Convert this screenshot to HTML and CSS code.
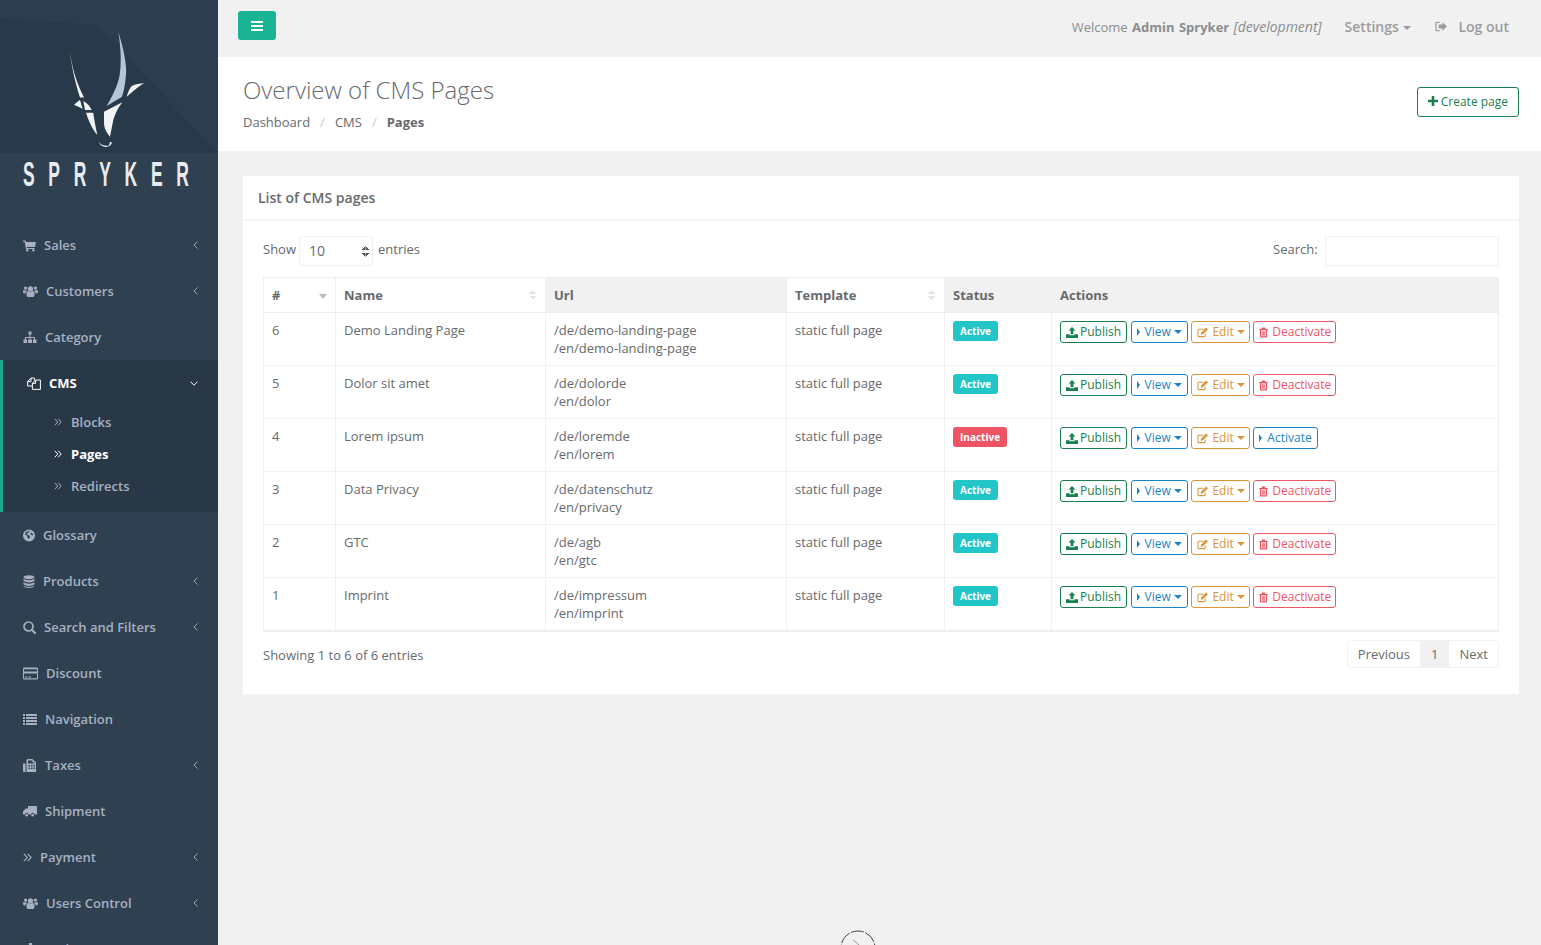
FILE: index.html
```html
<!DOCTYPE html>
<html>

<head>
    <title>Overview of CMS Pages</title>
    <link rel="stylesheet" href="styles.css">
</head>

<body>
    <svg class="sprite" xmlns="http://www.w3.org/2000/svg">
        <symbol id="i-cart" viewBox="0 0 13 12"><path d="M0 1h2.600l.4 1.400H13l-1 5H3.800l.2 1h7.600v1.200H3L1.600 2.200H0z"/><circle cx="4.200" cy="10.800" r="1.200"/><circle cx="10.400" cy="10.800" r="1.200"/></symbol>
        <symbol id="i-users" viewBox="0 0 15 12"><circle cx="7.500" cy="3.400" r="2.600"/><circle cx="2.600" cy="2.600" r="1.700"/><circle cx="12.400" cy="2.600" r="1.700"/><path d="M3.400 8.200c0-2 1.400-2.600 2.200-2.600.6.500 1.200.7 1.900.7s1.300-.2 1.900-.7c.8 0 2.200.6 2.200 2.600 0 2-.6 3.400-2.200 3.400H5.600c-1.600 0-2.200-1.400-2.200-3.400z"/><path d="M0 6c0-1 .5-1.600 1.200-1.600.5.400 1 .6 1.600.6.300 0 .6 0 .9-.2.100.3.300.5.500.7C3 6 2.400 6.800 2.300 8 .8 8 0 7.400 0 6zM15 6c0-1-.5-1.600-1.200-1.600-.5.400-1 .6-1.600.6-.3 0-.6 0-.9-.2-.1.300-.3.500-.5.700C12 6 12.600 6.800 12.700 8 14.200 8 15 7.400 15 6z"/></symbol>
        <symbol id="i-tree" viewBox="0 0 14 12"><path d="M5.500 0h3v3h-1v2.500H12V8h1.500v3.500H10V8h1V6.500H7.500V8H9v3.500H5V8h1.500V6.500H3V8h1v3.500H.5V8H2V5.500h4.500V3h-1z"/></symbol>
        <symbol id="i-copy" viewBox="0 0 14 13"><path d="M5 9H.6V4.600L4 1h3.400v2.400M4 1v3.600H.6M5.400 6.400 8.600 3h4.800v9.400h-8zM8.600 3v3.400H5.400" fill="none" stroke="currentColor" stroke-width="1"/></symbol>
        <symbol id="i-globe" viewBox="0 0 12 12"><path fill-rule="evenodd" d="M6 0a6 6 0 1 1 0 12A6 6 0 0 1 6 0zM3 2.500 2 5l2 1 .5 2 1.500 1.500L7 7 5.500 5.500 4 5V3.500L6 3l.5-1.500zM8 3l-.5 1.500L9 6l1.200-.5C10 4.500 9 3.500 8 3z"/></symbol>
        <symbol id="i-db" viewBox="0 0 12 13"><ellipse cx="6" cy="2.200" rx="5.500" ry="2"/><path d="M.5 3.600c1 1.200 3 1.600 5.500 1.600s4.500-.4 5.500-1.600v2c-.5 1.200-2.800 1.800-5.500 1.800S1 6.800.5 5.600zM.5 7.100c1 1.200 3 1.600 5.500 1.600s4.500-.4 5.500-1.600v2c-.5 1.200-2.800 1.800-5.500 1.800S1 10.300.5 9.100z"/><path d="M.5 10.500c1 1 3 1.400 5.500 1.400s4.500-.4 5.500-1.400v.5c-.5 1.200-2.800 2-5.500 2S1 12.200.5 11z"/></symbol>
        <symbol id="i-search" viewBox="0 0 13 13"><circle cx="5.500" cy="5.500" r="4.500" fill="none" stroke="currentColor" stroke-width="1.700"/><path d="m8.800 8.800 3.400 3.400" stroke="currentColor" stroke-width="2" stroke-linecap="round"/></symbol>
        <symbol id="i-card" viewBox="0 0 15 12"><path fill-rule="evenodd" d="M1.200 0h12.600A1.200 1.200 0 0 1 15 1.200v9.600a1.200 1.200 0 0 1-1.200 1.200H1.200A1.200 1.200 0 0 1 0 10.800V1.200A1.200 1.200 0 0 1 1.200 0zM1 1.800V4h13V1.800zM1 6v4.800h13V6zM2 9h2v1H2zM5 9h3v1H5z"/></symbol>
        <symbol id="i-list" viewBox="0 0 14 11"><path d="M0 0h2v2H0zM3 0h11v2H3zM0 3h2v2H0zM3 3h11v2H3zM0 6h2v2H0zM3 6h11v2H3zM0 9h2v2H0zM3 9h11v2H3z"/></symbol>
        <symbol id="i-tax" viewBox="0 0 14 13"><path fill-rule="evenodd" d="M0 4.500h2.500V13H1a1 1 0 0 1-1-1zM3.500 1.500A1.500 1.500 0 0 1 5 0h4.500L13 3.500V13H3.500zM5 1.500v3h6.500v-1h-2v-2zM5.500 6v1.500H7V6zM8 6v1.500h1.500V6zM10.500 6v1.500H12V6zM5.500 8.500V10H7V8.500zM8 8.500V10h1.500V8.500zM10.500 8.500V10H12V8.500z"/></symbol>
        <symbol id="i-truck" viewBox="0 0 14 11"><path d="M5 0h8a1 1 0 0 1 1 1v7.500h-2.500a1.800 1.800 0 0 0-3.500 0H5.500a1.800 1.800 0 0 0-3.500 0H0v-3l2.500-3H5z"/><circle cx="3.700" cy="9.300" r="1.300"/><circle cx="9.700" cy="9.300" r="1.300"/></symbol>
        <symbol id="i-dbl" viewBox="0 0 8 8"><path d="M.8.800 3.800 4l-3 3.200M4.200.8l3 3.200-3 3.200" fill="none" stroke="currentColor" stroke-width="1"/></symbol>
        <symbol id="i-left" viewBox="0 0 5 8"><path d="M4.500.5 1 4l3.500 3.500" fill="none" stroke="currentColor" stroke-width=".9"/></symbol>
        <symbol id="i-down" viewBox="0 0 8 5"><path d="M.5.700 4 4.200 7.500.7" fill="none" stroke="currentColor" stroke-width="1"/></symbol>
        <symbol id="i-upload" viewBox="0 0 12 11"><path d="M6 0l3.500 3.600H7.400v3.600H4.600V3.600H2.500zM0 7.200h3.600v1.100h4.800V7.200H12V11H0z"/></symbol>
        <symbol id="i-edit" viewBox="0 0 12 11"><path d="M9 6.500V9a1 1 0 0 1-1 1H2a1 1 0 0 1-1-1V3a1 1 0 0 1 1-1h5" fill="none" stroke="currentColor" stroke-width="1.100"/><path d="M10 0l2 2-5.500 5.500L4 8l.5-2.500z"/></symbol>
        <symbol id="i-trash" viewBox="0 0 10 11"><path fill-rule="evenodd" d="M3.500 0h3l.7 1.500H10v1H9V10a1 1 0 0 1-1 1H2a1 1 0 0 1-1-1V2.500H0v-1h2.800zM2.500 3v6.800h5V3zM3.500 4h.8v5h-.8zM4.700 4h.8v5h-.8zM5.900 4h.8v5h-.8z"/></symbol>
        <symbol id="i-logout" viewBox="0 0 13 11"><path d="M5 1H2a1 1 0 0 0-1 1v7a1 1 0 0 0 1 1h3" fill="none" stroke="currentColor" stroke-width="1.300"/><path d="M8 .8l5 4.700-5 4.700V7.600H4V3.400h4z"/></symbol>
        <symbol id="i-plus" viewBox="0 0 10 10"><path d="M3.700 0h2.600v3.700H10v2.600H6.300V10H3.700V6.300H0V3.700h3.700z"/></symbol>
    </svg>

    <div class="wrapper">
        <nav class="sidebar">
            <div class="logo">
                <div class="logo-mark">
                    <svg width="218" height="153" viewBox="0 0 218 153">
                        <path d="M0 18 97 25 218 153H0z" fill="#283a4a"/>
                        <path d="M69.300 45C71 65 75 82 80 97.500H84C76 82 71 65 69.300 45z" fill="#f3f4f5"/>
                        <path d="M118.300 31.700C124 50 127 66 126 75C125 85 124 92 121.700 97L106.700 106C111 98 117 88 119.500 76C121.500 64 121 48 118.300 31.700z" fill="#b5c5d8"/>
                        <path d="M126.700 96.700C128 92 130 88 131.700 86C136 84 140 83.500 144.300 83.300C140 85 136 89 126.700 96.700z" fill="#f3f4f5"/>
                        <path d="M74 105C76 103 78 101 80 100L82.700 109.300C80 107 77 106 74 105z" fill="#f3f4f5"/>
                        <path d="M83.300 101C87 103 90 106 91.700 110H85z" fill="#f3f4f5"/>
                        <path d="M86 112.700H93.300C94 120 96 128 97.300 135C93 130 89 122 86 112.700z" fill="#f3f4f5"/>
                        <path d="M104 111.700 122.300 102.300C118 108 115 114 113.300 120L110 136.700C106 132 104 128 104 122z" fill="#f3f4f5"/>
                        <path d="M98.300 141.700C102 146 106 146 109 145.500L110 142H111.700C112 147 103 150 98.300 141.700z" fill="#f3f4f5"/>
                    </svg>
                </div>
                <div class="logo-word"><span>SPRYKER</span></div>
            </div>

            <ul class="menu">
                <li class="menu-item"><a href="#"><svg class="ico w13"><use href="#i-cart"/></svg>Sales<svg class="arrow"><use href="#i-left"/></svg></a></li>
                <li class="menu-item"><a href="#"><svg class="ico w15"><use href="#i-users"/></svg>Customers<svg class="arrow"><use href="#i-left"/></svg></a></li>
                <li class="menu-item"><a href="#"><svg class="ico w14"><use href="#i-tree"/></svg>Category</a></li>
                <li class="menu-item open">
                    <a href="#"><svg class="ico w14"><use href="#i-copy"/></svg>CMS<svg class="arrow-down"><use href="#i-down"/></svg></a>
                    <ul class="submenu">
                        <li><a href="#"><svg class="dbl"><use href="#i-dbl"/></svg>Blocks</a></li>
                        <li class="active"><a href="#"><svg class="dbl"><use href="#i-dbl"/></svg>Pages</a></li>
                        <li><a href="#"><svg class="dbl"><use href="#i-dbl"/></svg>Redirects</a></li>
                    </ul>
                </li>
                <li class="menu-item"><a href="#"><svg class="ico w12"><use href="#i-globe"/></svg>Glossary</a></li>
                <li class="menu-item"><a href="#"><svg class="ico w12"><use href="#i-db"/></svg>Products<svg class="arrow"><use href="#i-left"/></svg></a></li>
                <li class="menu-item"><a href="#"><svg class="ico w13"><use href="#i-search"/></svg>Search and Filters<svg class="arrow"><use href="#i-left"/></svg></a></li>
                <li class="menu-item"><a href="#"><svg class="ico w15"><use href="#i-card"/></svg>Discount</a></li>
                <li class="menu-item"><a href="#"><svg class="ico w14"><use href="#i-list"/></svg>Navigation</a></li>
                <li class="menu-item"><a href="#"><svg class="ico w14"><use href="#i-tax"/></svg>Taxes<svg class="arrow"><use href="#i-left"/></svg></a></li>
                <li class="menu-item"><a href="#"><svg class="ico w14"><use href="#i-truck"/></svg>Shipment</a></li>
                <li class="menu-item"><a href="#"><svg class="ico w9"><use href="#i-dbl"/></svg>Payment<svg class="arrow"><use href="#i-left"/></svg></a></li>
                <li class="menu-item"><a href="#"><svg class="ico w15"><use href="#i-users"/></svg>Users Control<svg class="arrow"><use href="#i-left"/></svg></a></li>
                <li class="menu-item"><a href="#"><svg class="ico w15"><use href="#i-tree"/></svg>Maintenance</a></li>
            </ul>
        </nav>

        <main class="content">
            <div class="topbar">
                <a class="toggle" href="#"><span></span><span></span><span></span></a>
                <div class="topbar-right">
                    <span class="welcome">Welcome <b>Admin Spryker</b> <i>[development]</i></span>
                    <a class="top-link settings" href="#">Settings <span class="caret"></span></a>
                    <a class="top-link logout" href="#"><svg class="logout-ico"><use href="#i-logout"/></svg>Log out</a>
                </div>
            </div>

            <div class="page-heading">
                <div>
                    <h2>Overview of CMS Pages</h2>
                    <ol class="breadcrumb">
                        <li>Dashboard</li>
                        <li>CMS</li>
                        <li class="current">Pages</li>
                    </ol>
                </div>
                <a class="btn-create" href="#"><svg class="plus"><use href="#i-plus"/></svg>Create page</a>
            </div>

            <div class="panel">
                <div class="panel-title">List of CMS pages</div>
                <div class="panel-body">
                    <div class="table-tools">
                        <label class="length">Show <span class="fake-select">10<span class="updown"></span></span> entries</label>
                        <label class="search">Search: <input type="text"></label>
                    </div>

                    <table class="pages">
                        <thead>
                            <tr>
                                <th class="c-id plain sorted">#</th>
                                <th class="c-name plain sortable">Name</th>
                                <th class="c-url">Url</th>
                                <th class="c-tpl plain sortable">Template</th>
                                <th class="c-status">Status</th>
                                <th>Actions</th>
                            </tr>
                        </thead>
                        <tbody>
                            <tr>
                                <td>6</td><td>Demo Landing Page</td><td>/de/demo-landing-page<br>/en/demo-landing-page</td><td>static full page</td>
                                <td><span class="badge on">Active</span></td>
                                <td><div class="actions">
                                    <a class="b green" href="#"><svg class="bi"><use href="#i-upload"/></svg>Publish</a>
                                    <a class="b blue" href="#"><span class="tri"></span>View <span class="caret"></span></a>
                                    <a class="b orange" href="#"><svg class="bi"><use href="#i-edit"/></svg>Edit <span class="caret"></span></a>
                                    <a class="b red" href="#"><svg class="bt"><use href="#i-trash"/></svg>Deactivate</a>
                                </div></td>
                            </tr>
                            <tr>
                                <td>5</td><td>Dolor sit amet</td><td>/de/dolorde<br>/en/dolor</td><td>static full page</td>
                                <td><span class="badge on">Active</span></td>
                                <td><div class="actions">
                                    <a class="b green" href="#"><svg class="bi"><use href="#i-upload"/></svg>Publish</a>
                                    <a class="b blue" href="#"><span class="tri"></span>View <span class="caret"></span></a>
                                    <a class="b orange" href="#"><svg class="bi"><use href="#i-edit"/></svg>Edit <span class="caret"></span></a>
                                    <a class="b red" href="#"><svg class="bt"><use href="#i-trash"/></svg>Deactivate</a>
                                </div></td>
                            </tr>
                            <tr>
                                <td>4</td><td>Lorem ipsum</td><td>/de/loremde<br>/en/lorem</td><td>static full page</td>
                                <td><span class="badge off">Inactive</span></td>
                                <td><div class="actions">
                                    <a class="b green" href="#"><svg class="bi"><use href="#i-upload"/></svg>Publish</a>
                                    <a class="b blue" href="#"><span class="tri"></span>View <span class="caret"></span></a>
                                    <a class="b orange" href="#"><svg class="bi"><use href="#i-edit"/></svg>Edit <span class="caret"></span></a>
                                    <a class="b blue" href="#"><span class="tri"></span>Activate</a>
                                </div></td>
                            </tr>
                            <tr>
                                <td>3</td><td>Data Privacy</td><td>/de/datenschutz<br>/en/privacy</td><td>static full page</td>
                                <td><span class="badge on">Active</span></td>
                                <td><div class="actions">
                                    <a class="b green" href="#"><svg class="bi"><use href="#i-upload"/></svg>Publish</a>
                                    <a class="b blue" href="#"><span class="tri"></span>View <span class="caret"></span></a>
                                    <a class="b orange" href="#"><svg class="bi"><use href="#i-edit"/></svg>Edit <span class="caret"></span></a>
                                    <a class="b red" href="#"><svg class="bt"><use href="#i-trash"/></svg>Deactivate</a>
                                </div></td>
                            </tr>
                            <tr>
                                <td>2</td><td>GTC</td><td>/de/agb<br>/en/gtc</td><td>static full page</td>
                                <td><span class="badge on">Active</span></td>
                                <td><div class="actions">
                                    <a class="b green" href="#"><svg class="bi"><use href="#i-upload"/></svg>Publish</a>
                                    <a class="b blue" href="#"><span class="tri"></span>View <span class="caret"></span></a>
                                    <a class="b orange" href="#"><svg class="bi"><use href="#i-edit"/></svg>Edit <span class="caret"></span></a>
                                    <a class="b red" href="#"><svg class="bt"><use href="#i-trash"/></svg>Deactivate</a>
                                </div></td>
                            </tr>
                            <tr>
                                <td>1</td><td>Imprint</td><td>/de/impressum<br>/en/imprint</td><td>static full page</td>
                                <td><span class="badge on">Active</span></td>
                                <td><div class="actions">
                                    <a class="b green" href="#"><svg class="bi"><use href="#i-upload"/></svg>Publish</a>
                                    <a class="b blue" href="#"><span class="tri"></span>View <span class="caret"></span></a>
                                    <a class="b orange" href="#"><svg class="bi"><use href="#i-edit"/></svg>Edit <span class="caret"></span></a>
                                    <a class="b red" href="#"><svg class="bt"><use href="#i-trash"/></svg>Deactivate</a>
                                </div></td>
                            </tr>
                        </tbody>
                    </table>

                    <div class="table-foot">
                        <span class="info">Showing 1 to 6 of 6 entries</span>
                        <div class="pager">
                            <a href="#">Previous</a>
                            <a class="current" href="#">1</a>
                            <a href="#">Next</a>
                        </div>
                    </div>
                </div>
            </div>
        </main>
    </div>

    <svg class="spinner" width="36" height="36" viewBox="0 0 36 36">
        <circle cx="18" cy="18" r="17" fill="none" stroke="#444" stroke-width="1" stroke-dasharray="13 1.500"/>
        <path d="M13 10 19 15" stroke="#999" stroke-width="1" fill="none"/>
    </svg>
</body>

</html>
```

FILE: styles.css
```css
* {
    box-sizing: border-box;
}

html,
body {
    height: 100%;
}

body {
    margin: 0;
    overflow: hidden;
    background-color: #f1f1f1;
    font-family: "Open Sans", Arial, sans-serif;
    font-size: 13px;
    color: #676a6c;
}

a {
    text-decoration: none;
    color: inherit;
}

ul,
ol {
    list-style: none;
    margin: 0;
    padding: 0;
}

.sprite {
    display: none;
}

.wrapper {
    display: flex;
    height: 945px;
    overflow: hidden;
}

/* sidebar */
.sidebar {
    width: 218px;
    flex: none;
    background-color: #2f4050;
    overflow: hidden;
}

.logo {
    height: 222px;
}

.logo-mark {
    height: 153px;
    background-color: #2b3d4e;
}

.logo-mark svg {
    display: block;
}

.logo-word {
    height: 69px;
    overflow: hidden;
}

.logo-word span {
    display: block;
    width: 340px;
    margin-top: -1px;
    margin-left: 23px;
    font-family: "Liberation Sans", Arial, sans-serif;
    font-size: 35px;
    font-weight: 700;
    line-height: 44px;
    letter-spacing: 27.300px;
    color: #e9ebee;
    white-space: nowrap;
    transform: scaleX(0.5);
    transform-origin: 0 0;
}

.menu-item > a {
    display: flex;
    align-items: center;
    gap: 8px;
    height: 46px;
    padding: 0 20px 0 23px;
    font-weight: 600;
    color: #a7b1c2;
}

.ico {
    flex: none;
    height: 13px;
    fill: #a7b1c2;
    color: #a7b1c2;
}

.w9 { width: 9px; }
.w12 { width: 12px; }
.w13 { width: 13px; }
.w14 { width: 14px; }
.w15 { width: 15px; }

.arrow {
    width: 5px;
    height: 8px;
    margin-left: auto;
    color: #a7b1c2;
}

.arrow-down {
    width: 8px;
    height: 5px;
    margin-left: auto;
    color: #fff;
}

.menu-item.open {
    background-color: #293846;
    border-left: 3px solid #19aa8d;
    padding-bottom: 10px;
}

.menu-item.open > a {
    color: #fff;
    padding-left: 24px;
    font-weight: 700;
}

.menu-item.open .ico {
    color: #fff;
    fill: #fff;
}

.submenu a {
    display: flex;
    align-items: center;
    gap: 9px;
    height: 32px;
    padding-left: 51px;
    font-weight: 600;
    color: #a7b1c2;
}

.dbl {
    width: 8px;
    height: 8px;
    color: #a7b1c2;
}

.submenu .active a {
    color: #fff;
    font-weight: 700;
}

.submenu .active .dbl {
    color: #fff;
}

/* top */
.content {
    flex: 1;
    min-width: 0;
}

.topbar {
    display: flex;
    justify-content: space-between;
    height: 57px;
    padding: 11px 32px 0 20px;
}

.toggle {
    display: flex;
    flex-direction: column;
    justify-content: center;
    gap: 2px;
    width: 38px;
    height: 29px;
    padding: 0 13px;
    background-color: #1ab394;
    border-radius: 3px;
}

.toggle span {
    display: block;
    height: 2px;
    background-color: #fff;
}

.topbar-right {
    display: flex;
    align-items: center;
    height: 30px;
}

.welcome {
    margin-right: 23px;
    word-spacing: 1px;
    color: #8a8d8f;
}

.welcome i {
    font-size: 14px;
    word-spacing: 0;
}

.top-link {
    font-size: 14px;
    font-weight: 600;
    color: #999c9e;
}

.settings {
    margin-right: 24px;
}

.logout {
    display: flex;
    align-items: center;
}

.logout-ico {
    width: 12px;
    height: 11px;
    margin-right: 11px;
    fill: #999c9e;
    color: #999c9e;
}

.caret {
    display: inline-block;
    width: 0;
    height: 0;
    margin-left: 1px;
    vertical-align: middle;
    border-top: 4px solid;
    border-left: 4px solid transparent;
    border-right: 4px solid transparent;
}

.page-heading {
    display: flex;
    justify-content: space-between;
    align-items: flex-start;
    height: 94px;
    padding: 0 22px 0 25px;
    background-color: #fff;
}

h2 {
    margin: 16px 0 0;
    font-size: 24px;
    line-height: 34px;
    font-weight: 300;
    color: #676a6c;
}

.breadcrumb {
    display: flex;
    margin-top: 6px;
    line-height: 18px;
}

.breadcrumb li + li::before {
    content: "/";
    padding: 0 10px;
    color: #ccc;
    font-weight: 400;
}

.breadcrumb .current {
    font-weight: 700;
}

.btn-create {
    display: flex;
    align-items: center;
    margin-top: 30px;
    height: 30px;
    padding: 0 10px 2px;
    font-size: 12px;
    color: #1a7f4f;
    background-color: #fff;
    border: 1px solid #1a7f4f;
    border-radius: 3px;
}

.plus {
    width: 10px;
    height: 10px;
    margin-right: 3px;
    fill: #1a7f4f;
}

/* panel */
.panel {
    margin: 25px 22px 0 25px;
    background-color: #fff;
}

.panel-title {
    height: 45px;
    padding: 12px 15px 0;
    font-size: 14px;
    font-weight: 600;
    color: #676a6c;
    border-bottom: 2px solid #f5f5f5;
}

.panel-body {
    padding: 15px 20px 26px;
}

.table-tools {
    display: flex;
    justify-content: space-between;
    align-items: center;
    height: 30px;
    margin-bottom: 11px;
}

.length {
    display: flex;
    align-items: flex-start;
    gap: 3px;
    height: 30px;
    line-height: 26px;
}

.fake-select {
    position: relative;
    display: block;
    width: 74px;
    height: 30px;
    margin-right: 2px;
    padding: 4px 9px;
    font-size: 14px;
    line-height: 20px;
    border: 1px solid #f1f1f1;
    border-radius: 3px;
}

.updown {
    position: absolute;
    right: 3px;
    top: 9px;
    width: 7px;
    height: 11px;
    background:
        linear-gradient(to bottom right, transparent 50%, #555 50%) 0 0 / 3.500px 4px no-repeat,
        linear-gradient(to bottom left, transparent 50%, #555 50%) 100% 0 / 3.500px 4px no-repeat,
        linear-gradient(to top right, transparent 50%, #555 50%) 0 100% / 3.500px 4px no-repeat,
        linear-gradient(to top left, transparent 50%, #555 50%) 100% 100% / 3.500px 4px no-repeat;
}

.search input {
    width: 174px;
    height: 30px;
    margin-left: 4px;
    border: 1px solid #f1f1f1;
    vertical-align: middle;
}

table.pages {
    width: 100%;
    table-layout: fixed;
    border-collapse: collapse;
    border: 1px solid #eee;
    border-bottom-width: 2px;
}

table.pages th {
    position: relative;
    height: 35px;
    padding: 0 8px;
    text-align: left;
    font-weight: 700;
    color: #676a6c;
    background-color: #f1f1f1;
    border-left: 1px solid #f1f1f1;
    border-bottom: 1px solid #eee;
}

table.pages th.plain {
    background-color: #fff;
    border-left-color: #eee;
}

table.pages th.sortable::after {
    content: "";
    position: absolute;
    right: 8px;
    top: 12px;
    width: 8px;
    height: 10px;
    background:
        linear-gradient(to bottom right, transparent 50%, #e4e4e4 50%) 0 0 / 4px 4px no-repeat,
        linear-gradient(to bottom left, transparent 50%, #e4e4e4 50%) 100% 0 / 4px 4px no-repeat,
        linear-gradient(to top right, transparent 50%, #e4e4e4 50%) 0 100% / 4px 4px no-repeat,
        linear-gradient(to top left, transparent 50%, #e4e4e4 50%) 100% 100% / 4px 4px no-repeat;
}

table.pages th.sorted::after {
    content: "";
    position: absolute;
    right: 8px;
    top: 16px;
    border-top: 5px solid #bbb;
    border-left: 4.500px solid transparent;
    border-right: 4.500px solid transparent;
}

.c-id { width: 72px; }
.c-name { width: 210px; }
.c-url { width: 241px; }
.c-tpl { width: 158px; }
.c-status { width: 107px; }

table.pages td {
    height: 53px;
    padding: 8px 8px 0;
    vertical-align: top;
    line-height: 18px;
    border-left: 1px solid #f1f1f1;
    border-bottom: 1px solid #f1f1f1;
}

.badge {
    display: inline-block;
    height: 20px;
    padding: 0 7px;
    font-size: 10px;
    font-weight: 700;
    line-height: 20px;
    color: #fff;
    border-radius: 3px;
}

.badge.on {
    background-color: #23c6c8;
}

.badge.off {
    background-color: #ed5565;
}

.actions {
    display: flex;
    gap: 3.500px;
}

.b {
    display: flex;
    align-items: center;
    height: 22px;
    padding: 0 5px;
    font-size: 12px;
    background-color: #fff;
    border: 1px solid;
    border-radius: 3px;
    white-space: pre;
}

.b.green { color: #1a7f4f; fill: #1a7f4f; }
.b.blue { color: #1c84c6; }
.b.orange { color: #d9953a; fill: #d9953a; padding-right: 4px; }
.b.red { color: #ed5565; fill: #ed5565; padding-right: 4px; }

.bi {
    width: 12px;
    height: 11px;
    margin-right: 2px;
}

.orange .bi {
    width: 11px;
    margin-right: 4px;
}

.orange .caret,
.blue .caret {
    margin-left: 0;
}

.bt {
    width: 9px;
    height: 11px;
    margin-right: 4px;
}

.tri {
    width: 0;
    height: 0;
    margin-right: 5px;
    border-left: 3px solid;
    border-top: 4px solid transparent;
    border-bottom: 4px solid transparent;
}

.table-foot {
    display: flex;
    justify-content: space-between;
    align-items: flex-start;
    height: 28px;
    margin-top: 8px;
}

.info {
    padding-top: 1px;
    line-height: 28px;
}

.pager {
    display: flex;
    border: 1px solid #f1f1f1;
    border-radius: 4px;
}

.pager a {
    height: 26px;
    padding: 0 10px;
    line-height: 26px;
}

.pager .current {
    padding: 0 11px;
    background-color: #f1f1f1;
}

/* loader peeking in at the bottom of the window */
.spinner {
    position: absolute;
    left: 840px;
    top: 930px;
}
```
